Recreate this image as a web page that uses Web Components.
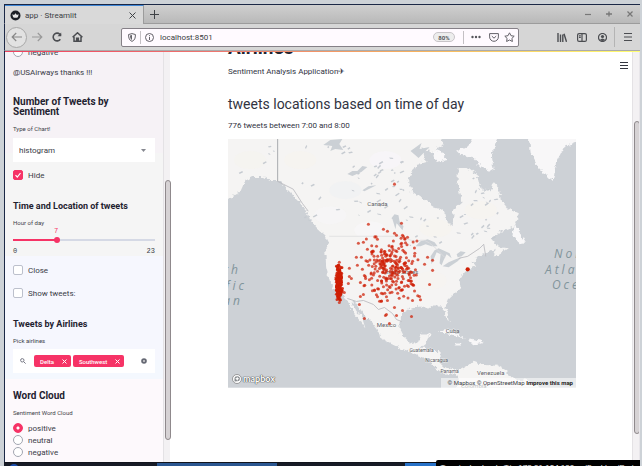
<!DOCTYPE html>
<html lang="en">
<head>
<meta charset="utf-8">
<title>app · Streamlit</title>
<style>
  html, body { height: 100%; }
  body { margin: 0; background: #cdd2d7; font-family: Roboto, "Noto Sans", sans-serif; font-size: 8px; color: #31333f; overflow: hidden; }
</style>
</head>
<body>
<browser-window></browser-window>
<script>
const define = (name, html, setup) => customElements.define(name, class extends HTMLElement {
  connectedCallback() {
    if (this.shadowRoot) return;
    const t = document.createElement('template');
    t.innerHTML = '<style>*{box-sizing:border-box}</style>' + html;
    this.attachShadow({ mode: 'open' }).append(t.content.cloneNode(true));
    if (setup) setup.call(this, this.shadowRoot);
  }
});

define('tab-strip', `
<style>
  :host { display: flex; height: 20px; background: linear-gradient(#cfcfcf, #b9b9b9); border-bottom: 1px solid #9c9c9c; font-size: 8px; }
  .tab { display: flex; align-items: center; width: 139px; padding: 0 6px 0 5px; gap: 4px; background: #d9d9d9; border-top: 1px solid #3f87d6; border-right: 1px solid #9c9c9c; margin-bottom: -1px; }
  .tab span { flex: 1; color: #3c3f44; }
  button { all: unset; display: grid; place-items: center; width: 10px; }
  .add { width: 20px; }
  .win { margin-left: auto; display: flex; gap: 11px; padding-right: 5px; }
  svg { display: block; fill: none; stroke: #3f4246; }
</style>
<div class="tab">
  <svg width="11" height="11" viewBox="0 0 11 11"><circle cx="5.500" cy="5.500" r="5" fill="#1c2026" stroke="none"/><path d="M2.300 4.200 4.100 5 5.500 3.300 6.900 5 8.700 4.200 7.900 7.300Q5.500 8.300 3.100 7.300Z" fill="#e6e6e6" stroke="none"/></svg>
  <span>app · Streamlit</span>
  <button aria-label="Close tab"><svg width="7" height="7"><path d="M.5.5l6 6m0-6l-6 6"/></svg></button>
</div>
<button class="add" aria-label="New tab"><svg width="9" height="9"><path d="M4.500 0v9M0 4.500h9"/></svg></button>
<div class="win">
  <button aria-label="Minimise"><svg width="6" height="6" stroke-width="1.200"><path d="M0 3.500h6" stroke="#777"/></svg></button>
  <button aria-label="Maximise"><svg width="6" height="6"><path d="M0 3h6M3 .5v5" stroke="#777" stroke-width="1.300"/></svg></button>
  <button aria-label="Close"><svg width="6" height="6"><path d="M.5.5l5 5m0-5l-5 5" stroke="#777" stroke-width="1.200"/></svg></button>
</div>`);

define('nav-bar', `
<style>
  :host { display: flex; align-items: center; height: 27px; background: #d6d6d6; border-bottom: 1px solid #ababab; padding: 0 2px 0 1px; }
  button { all: unset; display: grid; place-items: center; width: 20px; height: 20px; }
  .back { border: 1px solid #a8a8a8; border-radius: 50%; background: #e2e2e2; box-sizing: border-box; width: 21px; height: 21px; }
  svg { display: block; fill: none; stroke: #4b4d51; stroke-width: 1.200; }
  .url { flex: 1; display: flex; align-items: center; height: 19px; margin-left: 34px; border: 1px solid #858087; border-radius: 2px; background: #fffaff; padding: 0 0 0 2px; }
  .url svg { stroke: #636168; stroke-width: 1; }
  .url button { width: 16px; height: 16px; }
  .url button + button { width: 18px; }
  .address { flex: 1; min-width: 0; border: 0; padding: 0 3px; background: none; outline: none; color: #3a3c42; font: inherit; }
  .sep { width: 1px; height: 13px; background: #c4c0c4; }
  .url .zoom { width: 22px; height: 10px; border-radius: 5px; border: 1px solid #c8c4c8; box-sizing: border-box; background: #ededed; font-size: 6px; font-weight: 700; text-align: center; color: #55575b; margin-right: 8px; }
  .tools { display: flex; margin-left: 33px; align-items: center; }
  .tools .sep { height: 20px; background: #b4b4b4; margin: 0 3px 0 2px; }
</style>
<button class="back" aria-label="Back"><svg width="11" height="10" style="stroke:#888"><path d="M11 5H1.200M5.200 1l-4 4 4 4"/></svg></button>
<button aria-label="Forward"><svg width="11" height="10" style="stroke:#999"><path d="M0 5h9.800M5.800 1l4 4-4 4"/></svg></button>
<button aria-label="Reload"><svg width="10" height="10" style="stroke-width:1.600"><path d="M8.300 7.200A3.900 3.900 0 1 1 7.800 2.200L9 3.600"/><path d="M9.200.5v3.700H5.500z" fill="#4b4d51" stroke="none"/></svg></button>
<button aria-label="Home"><svg width="11" height="10"><path d="M.6 5.300 5.500.8l4.900 4.500M2 4.800v4.500h7V4.800" style="stroke-width:1.500"/><path d="M4.500 9.500V6h2v3.500" fill="#4b4d51"/></svg></button>
<div class="url">
  <button aria-label="Tracking protection"><svg width="8" height="9"><path d="M4 .6 7.400 1.500C7.500 5 6.700 7.300 4 8.400 1.300 7.300.5 5 .6 1.500Z"/><path d="M4 2v5C2.500 6.200 2 4.800 2 2.500z" fill="#636168" stroke="none"/></svg></button><span class="sep"></span>
  <button aria-label="Site information"><svg width="9" height="9"><circle cx="4.500" cy="4.500" r="4"/><path d="M4.500 4v3M4.500 2.200v1"/></svg></button>
  <input class="address" aria-label="Address" value="localhost:8501">
  <button class="zoom">80%</button><span class="sep"></span>
  <button aria-label="More actions" style="width:24px"><svg width="10" height="4"><g fill="#55555b" stroke="none"><circle cx="1.500" cy="2" r="1.200"/><circle cx="5" cy="2" r="1.200"/><circle cx="8.500" cy="2" r="1.200"/></g></svg></button>
  <button aria-label="Save to Pocket" style="width:12px"><svg width="10" height="9"><path d="M.6.6h8.800v3.300a4.400 4.400 0 0 1-8.800 0zM2.800 3.100 5 5.200l2.200-2.100"/></svg></button>
  <button aria-label="Bookmark" style="width:18px"><svg width="11" height="10"><path d="M5.500.8 7 3.700l3.200.5-2.300 2.200.5 3.100-2.900-1.500-2.900 1.500.5-3.100L.8 4.200 4 3.700z"/></svg></button>
</div>
<div class="tools">
  <button aria-label="Library"><svg width="10" height="9" style="stroke-width:1.400"><path d="M1 0v9M3.500 1.500V9M5.800 1.500V9M7 .8 9.500 8.800"/></svg></button>
  <button aria-label="Sidebars"><svg width="10" height="9"><rect x=".6" y=".6" width="8.800" height="7.800" rx="1.500"/><path d="M5 .6v7.800M2 2.800h1.800M2 4.500h1.800"/></svg></button>
  <button aria-label="Account"><svg width="9" height="9"><circle cx="4.500" cy="4.500" r="4"/><circle cx="4.500" cy="3.500" r="1.600" fill="#4b4d51" stroke="none"/><path d="M1.700 7Q4.500 4 7.300 7 4.500 9 1.700 7" fill="#4b4d51" stroke="none"/></svg></button>
  <span class="sep"></span>
  <button aria-label="Menu"><svg width="8" height="8" style="stroke-width:1"><path d="M0 .5h8M0 4h8M0 7.500h8"/></svg></button>
</div>`);

define('side-field', `
<style>
  :host { display: block; }
  .label { font-size: 6px; line-height: 8px; color: #3d3f4a; }
</style>
<div class="label"><slot name="label"></slot></div><slot></slot>`);

define('choice-box', `
<style>
  :host { display: block; height: 12px; }
  label { display: flex; align-items: center; gap: 5px; height: 12px; font-size: 8px; }
  input { appearance: none; flex: none; width: 10px; height: 10px; margin: 0; border: 1px solid #bcc0cc; border-radius: 2px; background: #fff; }
  input[type=radio] { border-radius: 50%; border-color: #a2a5b0; }
  input:checked { border-color: #f63366; background: #f63366; }
  input[type=radio]:checked { border-color: #f63366; background: radial-gradient(circle, #fff 1px, #f63366 2px); }
  input[type=checkbox]:checked { background: #f63366 url("data:image/svg+xml,%3Csvg xmlns='http://www.w3.org/2000/svg' viewBox='0 0 8 8'%3E%3Cpath d='M1.500 4.200 3.300 6 6.500 2' fill='none' stroke='white' stroke-width='1.200'/%3E%3C/svg%3E") center / 8px no-repeat; }
</style>
<label><input><span><slot></slot></span></label>`, function (r) {
  const i = r.querySelector('input');
  i.type = this.getAttribute('kind') || 'checkbox';
  i.checked = this.hasAttribute('checked');
});

define('hour-slider', `
<style>
  :host { display: grid; grid-template-rows: 8px 9px 11px; font-size: 7px; line-height: 8px; font-family: "Liberation Mono", monospace; }
  output { margin-left: 43px; transform: translateX(-50%); justify-self: start; color: #f63366; }
  input { appearance: none; width: 100%; height: 7px; margin: 1px 0; background: linear-gradient(90deg, #f63366 31%, #d5d9e5 31%) center / 100% 2px no-repeat; }
  input::-webkit-slider-thumb { appearance: none; width: 6px; height: 6px; border-radius: 50%; background: #f63366; }
  .ends { display: flex; justify-content: space-between; align-items: end; }
</style>
<output>7</output><input type="range" min="0" max="23" value="7" aria-label="Hour of day"><div class="ends"><span>0</span><span>23</span></div>`);

define('tag-chip', `
<style>
  :host { display: flex; align-items: center; height: 12px; padding: 0 3px 0 6px; gap: 7px; border-radius: 2px; background: #f63366; color: #fff; font-size: 6px; font-weight: 500; }
  button { all: unset; display: block; padding: 1px; }
  svg { display: block; stroke: #fff; }
</style>
<slot></slot><button aria-label="Remove"><svg width="5" height="5"><path d="M.5.5l4 4m0-4l-4 4"/></svg></button>`);

define('scroll-track', `
<style>
  :host { display: block; position: relative; width: 7px; flex: none; background: #f3f1f3; border-left: 1px solid #e4e2e5; }
  i { position: absolute; left: 1px; width: 6px; top: var(--top); bottom: var(--bottom); border: 1px solid #8f898c; border-radius: 3px; background: #d6d2d4; }
</style><i></i>`);

define('side-panel', `
<style>
  :host { display: block; overflow: hidden; padding: 0 8px; color: #3a3c47;
    background: linear-gradient(#f6f2f6 101px, #f5f5f5 101px 204px, #f6f7fe 204px 308px, #f4f8fe 308px 327px, #fdf9fc 327px); }
  h2, h3 { margin: 0; color: #1f2230; font-weight: 700; }
  h2 { font-size: 10px; line-height: 10px; }
  h3 { font-size: 9px; line-height: 10px; }
  .first { margin-top: -6px; }
  p { margin: 9px 0 18px; font-size: 8px; line-height: 12px; }
  side-field { margin-top: 8px; }
  .select { position: relative; margin-top: 5px; }
  select { appearance: none; display: block; width: 100%; height: 24px; border: 0; background: #fff; padding: 0 6px; font: inherit; font-size: 8px; color: #3a3c47; }
  .select svg { position: absolute; right: 9px; top: 11px; }
  .multi { display: flex; align-items: center; gap: 2px; height: 24px; margin-top: 4px; padding: 0 8px 0 7px; background: #fff; }
  .multi > svg:first-child { margin-right: 6px; }
  .multi button { all: unset; margin-left: auto; }
  svg { display: block; }
</style>
<choice-box class="first" kind="radio">negative</choice-box>
<p>@USAirways thanks !!!</p>
<h2 style="max-width:120px">Number of Tweets by Sentiment</h2>
<side-field><label slot="label" for="chart">Type of Chart!</label>
  <div class="select"><select id="chart"><option>histogram</option></select><svg width="5" height="3"><path d="M0 0h5L2.500 3z" fill="#868890"/></svg></div>
</side-field>
<choice-box checked style="margin-top:7px">Hide</choice-box>
<h3 style="margin-top:20px">Time and Location of tweets</h3>
<side-field><span slot="label">Hour of day</span><hour-slider></hour-slider></side-field>
<choice-box style="margin-top:9px">Close</choice-box>
<choice-box style="margin-top:11px">Show tweets:</choice-box>
<h3 style="margin-top:20px">Tweets by Airlines</h3>
<side-field><span slot="label">Pick airlines</span>
  <div class="multi"><svg width="6" height="6" fill="none" stroke="#777985"><circle cx="2.300" cy="2.300" r="1.700"/><path d="M3.600 3.600 5.600 5.600"/></svg>
    <tag-chip>Delta</tag-chip><tag-chip>Southwest</tag-chip>
    <button aria-label="Clear all"><svg width="6" height="6"><circle cx="3" cy="3" r="2.800" fill="#666974"/><path d="M2 2l2 2m0-2L2 4" stroke="#ddd" stroke-width=".7"/></svg></button></div>
</side-field>
<h2 style="margin-top:18px">Word Cloud</h2>
<side-field><span slot="label">Sentiment Word Cloud</span>
  <choice-box kind="radio" checked style="margin-top:5px">positive</choice-box><choice-box kind="radio">neutral</choice-box><choice-box kind="radio">negative</choice-box>
</side-field>`);

define('tweet-map', `
<style>
  :host { display: block; position: relative; }
  svg { display: block; width: 100%; }
  .logo { position: absolute; left: 4px; bottom: 4px; display: flex; align-items: center; gap: 1px; color: #fff; font: 700 9px/10px Lato, sans-serif; text-shadow: 0 0 1px #444, 0 0 1px #555, 0 0 1px #666; text-decoration: none; }
  .logo svg { width: 10px; height: 10px; }
  .credit { position: absolute; right: 0; bottom: 0; height: 10px; padding: 0 3px 0 6px; background: rgba(255,255,255,.55); font-size: 6px; line-height: 10px; white-space: nowrap; }
  .credit a { color: #404347; text-decoration: none; } .credit b { color: #222; }
</style>
<svg id="map" viewBox="228 139 347 248" role="img" aria-label="Map of tweet locations in North America">
  <defs><filter id="rough" x="0" y="0" width="100%" height="100%" filterUnits="objectBoundingBox"><feTurbulence type="fractalNoise" baseFrequency=".22" numOctaves="3" seed="4"/><feDisplacementMap in="SourceGraphic" scale="6" xChannelSelector="R" yChannelSelector="G"/></filter>
  <clipPath id="box"><rect x="228" y="139" width="347" height="248"/></clipPath></defs>
  <rect x="228" y="139" width="347" height="248" fill="#cdd1d6"/>
  <g clip-path="url(#box)">
  <g filter="url(#rough)">
    <path fill="#f5f4f3" d="M220 130V205L233 196 240 192 245 181 252 177 263 177 270 181 281 181 287 190 293 196 299 202 307 211 310 220 317 228 325 235 329 243 325 251 326 268 330 282 335 290 341 293 346 299 352 310 357 317 365 328 362 318 356 310 351 302 356 303 363 313 372 322 378 330 380 338 390 343 400 348 410 351 417 355 427 359 435 367 443 373 452 372 457 376 457 395H545L537 385 527 380 517 379 507 374 506 370 497 365 480 364 472 361 469 364 458 370 450 368 443 366 439 362 439 352 430 348 420 347 425 343 429 334 421 334 418 341 410 343 403 337 399 329 399 322 402 313 410 308 421 306 428 308 432 305 442 305 445 315 449 321 448 313 445 306 447 300 453 294 460 287 459 280 463 273 467 269 475 266 472 262 477 256 486 253 495 248 493 257 507 248 501 247 495 244 490 238 500 231 514 226 518 213 507 208 500 200 498 187 493 182 490 191 481 189 478 177 467 168 457 168 457 182 461 203 453 210 452 227 445 219 443 210 433 207 423 199 411 191 408 178 415 165 425 162 422 147 430 153 443 145 437 130Z"/>
    <path fill="#f8f7f8" d="M456 151 469 145 474 130 500 130 495 142 491 155 493 172 482 168 472 157 460 155ZM527 130 530 153 537 167 552 182 555 163 563 147 575 142 585 130ZM511 237 514 225 518 231 525 243 519 244ZM433 149 443 153 446 160 435 162ZM438 331 448 329 458 334 465 338 452 335ZM470 338 483 341 475 344 468 342ZM455 343 461 343 460 345 454 345Z"/>
  </g>
  <g id="detail"></g>
  <g fill="#cbd0d5"><path d="M323 145 330 140 342 139 339 144 343 150 335 149 330 151 332 146ZM347 174 352 171 357 171 362 166 367 167 361 172 352 176ZM362 190 368 186 376 185 370 188 364 191ZM391 218 394 214 398 215 399 221 403 226 402 230 397 224ZM396 223 395 229 392 219ZM415 246 420 241 427 239 434 242 437 246 431 246 425 244 420 246ZM431 264 430 256 434 250 438 248 449 253 451 258 446 254 443 260 441 265 439 263 440 254 436 252 434 257ZM442 266 448 262 455 259 461 257 457 261 448 267ZM456 254 460 251 465 252 461 256 457 257ZM410 151 421 143 419 149 429 147 423 153 418 158Z"/></g>
  <g fill="none" stroke="#bfc0c4" stroke-width=".8"><path d="M277.500 139V181" stroke="#a9abaf" stroke-width="1"/><path d="M277 181 293 189 302 203 308 211M458 258 467 256 479 248 483 244 485 256M347 298 356 301 363 300 373 304 378 309 384 307 392 313 396 319 401 321" stroke="#b6b7bb"/><path d="M329 236H401Q414 243 420 240T444 257" stroke="#dcdcde"/></g>
  <g id="lakes" fill="#c6cbd1"></g>
  <g font-size="6" fill="#5d6064" stroke="#fff" stroke-width=".8" stroke-opacity=".6" paint-order="stroke" text-anchor="middle">
    <text x="377" y="206">Canada</text><text x="400" y="274">United States</text><text x="386" y="326">Mexico</text><text x="452" y="332">Cuba</text><text x="490" y="374">Venezuela</text>
    <g font-size="5"><text x="421" y="351">Guatemala</text><text x="436" y="361">Nicaragua</text><text x="449" y="372">Panama</text></g><text x="473" y="387">Colombia</text>
  </g>
  <g font-family="'Open Sans', sans-serif" font-style="italic" font-size="12" fill="#81949b" letter-spacing="3">
    <text x="241" y="274" text-anchor="end">th</text><text x="247" y="290" text-anchor="end">cific</text><text x="243" y="305" text-anchor="end">an</text>
    <text x="553" y="258">North</text><text x="544" y="274">Atlantic</text><text x="551" y="289">Ocean</text>
  </g>
  <g id="dots" fill="#cf1f05"></g>
  </g>
</svg>
<a class="logo" href="#mapbox"><svg viewBox="0 0 10 10"><circle cx="5" cy="5" r="4.500" fill="#fff" stroke="#777" stroke-width=".7"/><path d="M2.500 7.500V4.800A2.700 2.500 0 1 1 5 7.300Z" fill="#85898d"/><path d="M5.200 2.700 5.900 4.100 7.300 4.800 5.900 5.500 5.200 6.900 4.500 5.500 3.100 4.800 4.500 4.100Z" fill="#fff"/></svg>mapbox</a>
<div class="credit"><a href="#m">© Mapbox</a> <a href="#o">© OpenStreetMap</a> <a href="#i"><b>Improve this map</b></a></div>`, r => {
  let seed = 20;
  const rnd = () => (seed = (seed * 16807) % 2147483647) / 2147483647;
  const gauss = () => (rnd() + rnd() + rnd() + rnd() - 2) * 1.7;
  const dot = (x, y, rad, o) => `<circle cx="${x.toFixed(1)}" cy="${y.toFixed(1)}" r="${rad}" opacity="${o}"/>`;
  let s = '';
  const outer = [394,184,401,223,368,224,383,229,387,231,394,233,396,235,402,235,407,237,358,243,363,242,377,239,367,249,356,257,361,257,427,257,432,260,432,270,429,284,424,264,419,296,412,300,402,310,411,316,364,318,359,304,385,315,386,314,396,315,394,307,389,323,387,300,363,294,360,296,349,268,349,276,351,278,348,283,357,265,362,269,364,275,360,282,344,292,339,262,339,302];
  for (let i = 0; i < outer.length; i += 2) s += dot(outer[i], outer[i + 1], 1.5, .72);
  for (let i = 0; i < 270; i++) {
    const x = 392 + gauss() * 15, y = 268 + gauss() * 18;
    if (x > 362 && x < 421 && y > 236 && y < 301) s += dot(x, y, 1.5, .72);
  }
  for (let i = 0; i < 260; i++) {
    const y = 283 + gauss() * 8;
    if (y > 264 && y < 300) s += dot(338.7 + gauss() * 1.4, y, 1.4, .85);
  }
  s += dot(467, 269, 2.1, 1);
  r.getElementById('dots').innerHTML = s;
  const spots = [[300,145,90,75,26],[372,160,40,50,30],[405,215,35,30,10],[455,195,45,45,20],[460,175,30,25,6],[235,145,40,28,5]];
  let l = '';
  for (const [x, y, w, h, n] of spots) for (let i = 0; i < n; i++) {
    const a = x + rnd() * w, b = y + rnd() * h;
    if (a > 404 && a < 457 && b < 212) continue;
    const p = 1 + rnd() * 3, q = rnd() * 4 - 1;
    l += `<path d="M${a.toFixed(1)} ${b.toFixed(1)}l${p.toFixed(1)} ${(-q).toFixed(1)} .9 1.2-${p.toFixed(1)} ${q.toFixed(1)}z"/>`;
  }
  r.getElementById('lakes').innerHTML = l;
  const tones = [[300,160,'#f6f3ee'],[250,160,'#f5f3ee'],[345,190,'#f0f1f2'],[330,215,'#f7f5f6'],[435,228,'#f6f4ee'],[480,210,'#f7f4ee'],[350,275,'#f5f3ef'],[430,280,'#f6f4ef'],[370,230,'#f8f6f8'],[385,160,'#f8f5f9']];
  r.getElementById('detail').innerHTML = tones.map(t => `<ellipse cx="${t[0]}" cy="${t[1]}" rx="16" ry="9" fill="${t[2]}" opacity=".7"/>`).join('');
});

define('app-page', `
<style>
  :host { display: flex; overflow: hidden; background: #fff; }
  main { flex: 1; position: relative; overflow: hidden; padding: 0 56px 0 58px; }
  h1 { margin: -14px 0 0; font-size: 19px; line-height: 20px; font-weight: 700; color: #222430; }
  p { margin: 0; line-height: 12px; font-size: 8px; }
  h2 { margin: 16px 0 6px; font-size: 14px; line-height: 20px; font-weight: 400; }
  tweet-map { margin-top: 7px; }
  .menu { all: unset; position: absolute; right: 4px; top: 10px; padding: 0; }
  .menu svg { display: block; }
</style>
<main>
  <h1>Airlines</h1>
  <p style="margin-top:8px">Sentiment Analysis Application✈</p>
  <h2>tweets locations based on time of day</h2>
  <p>776 tweets between 7:00 and 8:00</p>
  <tweet-map></tweet-map>
  <button class="menu" aria-label="Menu"><svg width="8" height="7" stroke="#333540"><path d="M0 .5h8M0 3.500h8M0 6.500h8"/></svg></button>
</main>
<scroll-track style="--top:69px;--bottom:28px"></scroll-track>`);

define('task-bar', `
<style>
  :host { display: flex; position: relative; height: 4px; background: #171b26; border-top: 1px solid #11141c; }
  .a { width: 19%; margin-left: 24%; background: #2b5791; } .b { width: 6%; margin-left: 20%; background: #2872c8; }
  .dot { position: absolute; left: 5px; top: 1px; width: 10px; height: 10px; border-radius: 50%; background: #1d4fae; }
  .tip { position: absolute; right: 0; bottom: 0; height: 6px; width: 32%; padding: 3px 0 0 4px; box-sizing: border-box; background: #000; border-radius: 2px 0 0 0; overflow: hidden; color: #eee; font: 8px/10px Roboto, sans-serif; white-space: nowrap; }
</style>
<span class="dot"></span><span class="a"></span><span class="b"></span><div class="tip">Terminal - ubuntu@ip-172-31-104-138: ~/Desktop/Project</div>`);

define('browser-window', `
<style>
  :host { display: grid; grid-template-rows: auto auto 1px minmax(0, 1fr) auto; height: 100vh; border: solid #cdd2d7; border-width: 4px 2px 0 4px; box-sizing: border-box; overflow: hidden; }
  tab-strip { border-top: 1px solid #1b2846; border-left: 1px solid #1b2846; }
  nav-bar, .line, .view { border-left: 1px solid #1b2846; }
  .line { background: linear-gradient(90deg, #f0405f, #ee7a70 35%, #f7b25e 65%, #ffff70); }
  .view { display: flex; min-height: 0; }
  side-panel { width: 158px; flex: none; }
  app-page { flex: 1; min-width: 0; border-right: 1px solid #e8e6ea; }
</style>
<tab-strip></tab-strip><nav-bar></nav-bar><div class="line"></div>
<div class="view"><side-panel></side-panel><scroll-track style="--top:128px;--bottom:22px"></scroll-track><app-page></app-page></div>
<task-bar></task-bar>`);
</script>
</body>
</html>
